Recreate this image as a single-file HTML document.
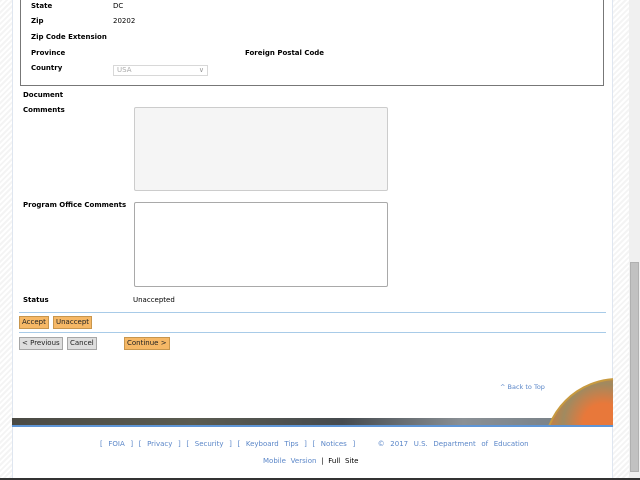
<!DOCTYPE html>
<html><head><meta charset="utf-8"><style>
*{margin:0;padding:0;box-sizing:border-box}
html,body{width:640px;height:480px;overflow:hidden}
body{position:relative;background:#fff;font-family:"DejaVu Sans","Liberation Sans",sans-serif;font-size:7px;color:#000}
.hatch{position:absolute;top:0;background:repeating-linear-gradient(135deg,#f4f4f4 0 2px,#fff 2px 4px)}
.main{position:absolute;left:12px;top:0;width:601px;height:478px;background:#fff;border-left:1px solid #dfe6f0;border-right:1px solid #dfe6f0}
.a{position:absolute;white-space:nowrap}
.b{font-weight:bold}
.ta{position:absolute;border:1px solid #a9a9a9;border-radius:2px}
.btn{position:absolute;height:13px;font-size:7px;line-height:11px;padding:0 2px;border:1px solid #c8964d;background:#f6b866;color:#222}
.gb{background:#dedede;border-color:#a6a6a6}
.hr{position:absolute;left:19px;width:587px;height:1px;background:#a8cbe8}
.ft{color:#5a86c8}
</style></head><body>
<div class="hatch" style="left:0;width:12px;height:478px"></div>
<div class="hatch" style="left:613px;width:16px;height:478px"></div>
<div style="position:absolute;left:629px;top:0;width:11px;height:478px;background:#f0f0f0"></div>
<div style="position:absolute;left:630px;top:262px;width:9px;height:210px;background:#c1c1c1;border:1px solid #b0b0b0"></div>
<div style="position:absolute;left:0;top:478px;width:640px;height:2px;background:#333"></div>
<div class="main"></div>
<div style="position:absolute;left:20px;top:-2px;width:584px;height:88px;border:1px solid #777;border-top:none"></div>
<div class="a b" style="left:31px;top:2px">State</div><div class="a" style="left:113px;top:2px">DC</div>
<div class="a b" style="left:31px;top:17px">Zip</div><div class="a" style="left:113px;top:17px">20202</div>
<div class="a b" style="left:31px;top:33px">Zip Code Extension</div>
<div class="a b" style="left:31px;top:49px">Province</div>
<div class="a b" style="left:245px;top:49px">Foreign Postal Code</div>
<div class="a b" style="left:31px;top:64px">Country</div>
<div class="a" style="left:113px;top:65px;width:95px;height:11px;border:1px solid #d8d8d8;color:#aaa;font-size:7px;line-height:9px;padding-left:3px">USA<span style="position:absolute;right:3px;top:0;color:#999">&#8744;</span></div>
<div class="a b" style="left:23px;top:91px">Document</div>
<div class="a b" style="left:23px;top:106px">Comments</div>
<div class="ta" style="left:134px;top:107px;width:254px;height:84px;background:#f5f5f5;border-color:#ccc"></div>
<div class="a b" style="left:23px;top:201px">Program Office Comments</div>
<div class="ta" style="left:134px;top:202px;width:254px;height:85px"></div>
<div class="a b" style="left:23px;top:296px">Status</div>
<div class="a" style="left:133px;top:296px">Unaccepted</div>
<div class="hr" style="top:312px"></div>
<div class="btn" style="left:19px;top:316px">Accept</div>
<div class="btn" style="left:53px;top:316px">Unaccept</div>
<div class="hr" style="top:332px"></div>
<div class="btn gb" style="left:19px;top:337px">&lt; Previous</div>
<div class="btn gb" style="left:67px;top:337px">Cancel</div>
<div class="btn" style="left:124px;top:337px">Continue &gt;</div>
<div class="a ft" style="left:500px;top:383px;font-size:6.5px">^ Back to Top</div>
<div style="position:absolute;left:12px;top:418px;width:601px;height:7px;background:linear-gradient(90deg,#4a4a44,#5a5b50 30%,#454a4e 55%,#8a9095 75%,#707a82)"></div>
<div style="position:absolute;left:543px;top:378px;width:70px;height:47px;overflow:hidden"><div style="position:absolute;left:0;top:0;width:150px;height:150px;border-radius:50%;background:radial-gradient(circle at 40% 30%,#e8783a 0 15%,#a08a60 30%,#d97a35 45%,#8a7a5a 60%);border:2px solid #c89a40"></div></div>
<div style="position:absolute;left:12px;top:425px;width:601px;height:2px;background:#5e95d6"></div>
<div class="a ft" style="left:100px;top:440px;font-size:7px;word-spacing:3.4px">[ FOIA ] [ Privacy ] [ Security ] [ Keyboard Tips ] [ Notices ] &nbsp; &nbsp;© 2017 U.S. Department of Education</div>
<div class="a" style="left:263px;top:457px;font-size:7px;word-spacing:2.5px"><span class="ft">Mobile Version</span> | Full Site</div>
</body></html>
